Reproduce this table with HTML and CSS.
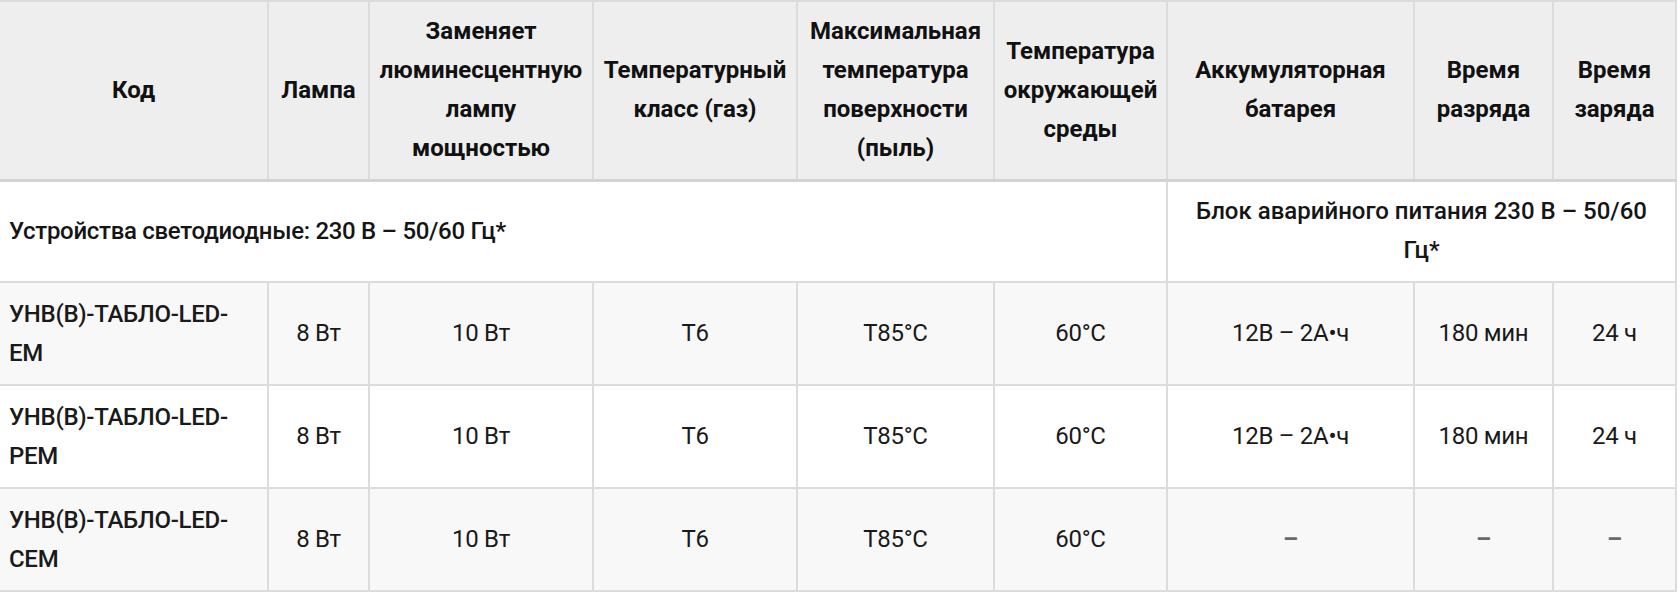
FILE: index.html
```html
<!DOCTYPE html>
<html lang="ru">
<head>
<meta charset="utf-8">
<title>Таблица</title>
<link rel="stylesheet" href="styles.css">
</head>
<body>
<table class="spec">
  <colgroup>
    <col class="c-code"><col class="c-lamp"><col class="c-repl"><col class="c-tgas"><col class="c-tdust"><col class="c-amb"><col class="c-bat"><col class="c-dis"><col class="c-chg">
  </colgroup>
  <thead>
    <tr class="head">
      <th>Код</th>
      <th>Лампа</th>
      <th>Заменяет люминесцентную лампу мощностью</th>
      <th>Температурный класс (газ)</th>
      <th>Максимальная температура поверхности (пыль)</th>
      <th>Температура окружающей среды</th>
      <th>Аккумуляторная батарея</th>
      <th>Время разряда</th>
      <th>Время заряда</th>
    </tr>
  </thead>
  <tbody>
    <tr class="section">
      <td colspan="6" class="sec-left">Устройства светодиодные: 230 В – 50/60 Гц*</td>
      <td colspan="3" class="sec-right">Блок аварийного питания 230 В – 50/60 Гц*</td>
    </tr>
    <tr class="row stripe">
      <td class="code">УНВ(В)-ТАБЛО-LED-EM</td>
      <td>8 Вт</td><td>10 Вт</td><td>T6</td><td>T85°C</td><td>60°C</td><td>12В – 2А•ч</td><td>180 мин</td><td>24 ч</td>
    </tr>
    <tr class="row">
      <td class="code">УНВ(В)-ТАБЛО-LED-PEM</td>
      <td>8 Вт</td><td>10 Вт</td><td>T6</td><td>T85°C</td><td>60°C</td><td>12В – 2А•ч</td><td>180 мин</td><td>24 ч</td>
    </tr>
    <tr class="row stripe">
      <td class="code">УНВ(В)-ТАБЛО-LED-CEM</td>
      <td>8 Вт</td><td>10 Вт</td><td>T6</td><td>T85°C</td><td>60°C</td><td class="dash">–</td><td class="dash">–</td><td class="dash">–</td>
    </tr>
  </tbody>
</table>
</body>
</html>
```
FILE: styles.css
```css
html, body {
  margin: 0;
  padding: 0;
  background: #ffffff;
}

body {
  font-family: Roboto, "Noto Sans", sans-serif;
  font-size: 24px;
  line-height: 39px;
  color: #1c1c1c;
}

.spec {
  width: 1676px;
  table-layout: fixed;
  border-collapse: collapse;
  border-top: 2px solid #d6d6d6;
}

.c-code { width: 268px; }
.c-lamp { width: 101px; }
.c-repl { width: 224px; }
.c-tgas { width: 204px; }
.c-tdust { width: 197px; }
.c-amb { width: 173px; }
.c-bat { width: 247px; }
.c-dis { width: 139px; }
.c-chg { width: 123px; }

.spec th,
.spec td {
  padding: 0 8px;
  text-align: center;
  vertical-align: middle;
  border: 2px solid #dcdcdc;
}

.spec td {
  letter-spacing: -0.3px;
}

.head {
  height: 179px;
  background: #eeeeee;
}

.head th {
  font-weight: 700;
  color: #111111;
  border-bottom: 3px solid #d3d3d3;
}

.section {
  height: 102px;
}

.section td {
  font-weight: 500;
  color: #151515;
}

.section .sec-left {
  text-align: left;
  padding-left: 9px;
  border-left: none;
}

.section .sec-right {
  padding: 0 16px;
  letter-spacing: normal;
}

.row {
  height: 103px;
  background: #ffffff;
}

.row.stripe {
  background: #f8f8f8;
}

.row td {
  color: #1a1a1a;
}

.row .code {
  text-align: left;
  padding-left: 9px;
  font-weight: 500;
  border-left: none;
}

.spec th:first-child {
  border-left: none;
}

.row .dash {
  color: #6a6a6a;
  font-weight: 700;
}
```
